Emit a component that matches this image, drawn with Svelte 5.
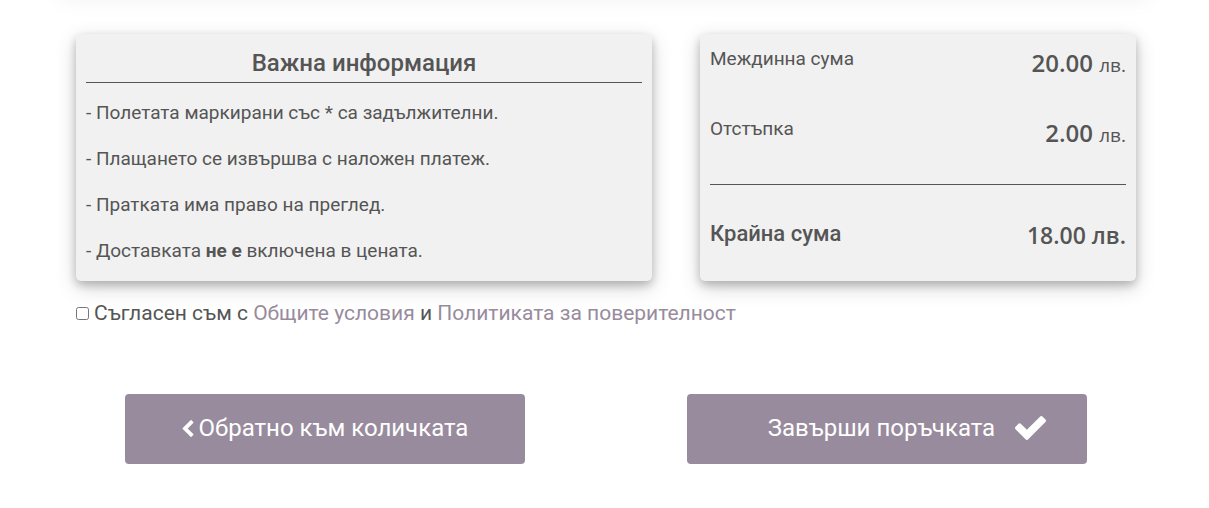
<script>
  const notes = [
    '- Полетата маркирани със * са задължителни.',
    '- Плащането се извършва с наложен платеж.',
    '- Пратката има право на преглед.'
  ];
  let agreed = $state(false);
</script>

<div class="previous"></div>
<main>
  <div class="cards">
    <section class="card info">
      <h2>Важна информация</h2>
      {#each notes as note}
        <p>{note}</p>
      {/each}
      <p>- Доставката <b>не е</b> включена в цената.</p>
    </section>
    <section class="card totals">
      <div class="row"><span>Междинна сума</span><span class="price">20.00 <small>лв.</small></span></div>
      <div class="row"><span>Отстъпка</span><span class="price">2.00 <small>лв.</small></span></div>
      <div class="row final"><span>Крайна сума</span><span class="price">18.00 лв.</span></div>
    </section>
  </div>

  <div class="terms">
    <input id="terms" type="checkbox" bind:checked={agreed} />
    <label for="terms">Съгласен съм с <a href="#terms">Общите условия</a> и <a href="#privacy">Политиката за поверителност</a></label>
  </div>

  <div class="actions">
    <button type="button">
      <svg class="chevron" viewBox="410 26 1036 1612" aria-hidden="true"><path d="M1427 301l-531 531 531 531q19 19 19 45t-19 45l-166 166q-19 19-45 19t-45-19l-742-742q-19-19-19-45t19-45l742-742q19-19 45-19t45 19l166 166q19 19 19 45t-19 45z" /></svg>
      Обратно към количката
    </button>
    <button type="button" class="finish">
      Завърши поръчката
      <svg class="check" viewBox="121 334 1550 1188" aria-hidden="true"><path d="M1671 566q0 40-28 68l-724 724-136 136q-28 28-68 28t-68-28l-136-136-362-362q-28-28-28-68t28-68l136-136q28-28 68-28t68 28l294 295 656-657q28-28 68-28t68 28l136 136q28 28 28 68z" /></svg>
    </button>
  </div>
</main>

<style>
  :global(body) {
    background: #fff;
    color: #555;
    font-family: Roboto, sans-serif;
  }
  .previous {
    height: 20px;
    margin: -24px 60px 0;
    box-shadow: 0 0 24px rgba(0, 0, 0, 0.08);
  }
  main {
    padding: 38px 73px 44px 76px;
  }
  .cards {
    display: grid;
    grid-template-columns: 576fr 436fr;
    gap: 48px;
  }
  .card {
    box-sizing: border-box;
    padding: 10px;
    border-radius: 5px;
    background: #f1f1f1;
    box-shadow: 0 4px 8px rgba(0, 0, 0, 0.2), 0 6px 20px rgba(0, 0, 0, 0.19);
    font-size: 19px;
    line-height: 30px;
  }
  h2 {
    margin: 0 0 15px;
    border-bottom: 1px solid #555;
    font-size: 24px;
    font-weight: 500;
    line-height: 38px;
    text-align: center;
  }
  p {
    margin: 0 0 16px;
  }
  .info p:last-child {
    margin-bottom: 5px;
  }
  .row {
    display: flex;
    justify-content: space-between;
    height: 70px;
  }
  .price {
    padding-top: 4px;
    font-family: "Open Sans", sans-serif;
    font-size: 24px;
    font-weight: 600;
  }
  .price small {
    font-size: 19px;
    font-weight: 400;
  }
  .final {
    box-sizing: border-box;
    border-top: 1px solid #555;
    padding-top: 34px;
    font-size: 22px;
    font-weight: 500;
  }
  .final .price {
    padding-top: 1px;
    font-size: 23px;
  }
  .terms {
    display: flex;
    align-items: center;
    gap: 5px;
    margin-top: 16px;
    font-size: 21px;
    line-height: 32px;
  }
  input {
    width: 13px;
    height: 13px;
    margin: 0;
  }
  a {
    color: #988b9d;
    text-decoration: none;
  }
  .actions {
    display: grid;
    grid-template-columns: 1fr 1fr;
    justify-items: center;
    gap: 64px;
    margin-top: 65px;
  }
  button {
    display: flex;
    align-items: center;
    justify-content: center;
    width: 400px;
    max-width: 100%;
    height: 70px;
    padding: 0 0 2px;
    border: 0;
    border-radius: 4px;
    background: #988b9d;
    color: #fff;
    font: 24px Roboto, sans-serif;
  }
  .finish {
    padding-left: 40px;
  }
  svg {
    fill: currentColor;
  }
  .chevron {
    width: 12px;
    height: 17px;
    margin-right: 5px;
  }
  .check {
    width: 31px;
    height: 24px;
    margin-left: 20px;
  }
</style>
